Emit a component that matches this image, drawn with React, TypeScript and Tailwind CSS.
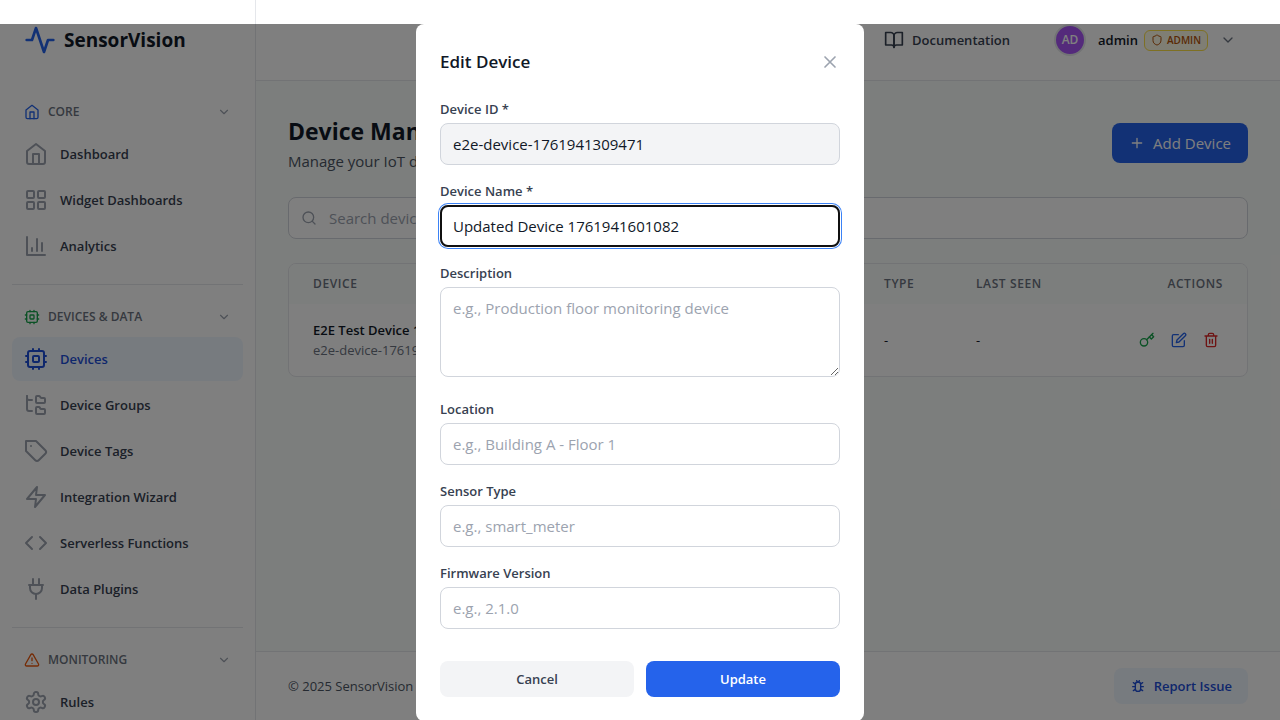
import React from 'react';

type IconProps = { className?: string; children: React.ReactNode };

function Svg({ className = 'size-6', children }: IconProps) {
  return (
    <svg
      className={'shrink-0 ' + className}
      viewBox="0 0 24 24"
      fill="none"
      stroke="currentColor"
      strokeWidth="2"
      strokeLinecap="round"
      strokeLinejoin="round"
      aria-hidden="true"
    >
      {children}
    </svg>
  );
}

const home = (
  <>
    <path d="m3 9 9-7 9 7v11a2 2 0 0 1-2 2H5a2 2 0 0 1-2-2z" />
    <polyline points="9 22 9 12 15 12 15 22" />
  </>
);
const grid = (
  <>
    <rect width="7" height="7" x="3" y="3" rx="1" />
    <rect width="7" height="7" x="14" y="3" rx="1" />
    <rect width="7" height="7" x="14" y="14" rx="1" />
    <rect width="7" height="7" x="3" y="14" rx="1" />
  </>
);
const chart = (
  <>
    <path d="M3 3v18h18" />
    <path d="M18 17V9" />
    <path d="M13 17V5" />
    <path d="M8 17v-3" />
  </>
);
const cpu = (
  <>
    <rect x="4" y="4" width="16" height="16" rx="2" />
    <rect x="9" y="9" width="6" height="6" rx="1" />
    <path d="M15 2v2M15 20v2M2 15h2M2 9h2M20 15h2M20 9h2M9 2v2M9 20v2" />
  </>
);
const folders = (
  <>
    <path d="M13 10h7a1 1 0 0 0 1-1V6a1 1 0 0 0-1-1h-2.5a1 1 0 0 1-.8-.4l-.9-1.2A1 1 0 0 0 15 3h-2a1 1 0 0 0-1 1v5a1 1 0 0 0 1 1Z" />
    <path d="M13 21h7a1 1 0 0 0 1-1v-3a1 1 0 0 0-1-1h-2.88a1 1 0 0 1-.9-.55l-.44-.9a1 1 0 0 0-.9-.55H13a1 1 0 0 0-1 1v5a1 1 0 0 0 1 1Z" />
    <path d="M3 3v2c0 1.1.9 2 2 2h3" />
    <path d="M3 3v13c0 1.1.9 2 2 2h3" />
  </>
);
const tag = (
  <>
    <path d="M12 2H2v10l9.29 9.29c.94.94 2.48.94 3.42 0l6.58-6.58c.94-.94.94-2.48 0-3.42L12 2Z" />
    <path d="M7 7h.01" />
  </>
);
const zap = <polygon points="13 2 3 14 12 14 11 22 21 10 12 10 13 2" />;
const code = (
  <>
    <polyline points="16 18 22 12 16 6" />
    <polyline points="8 6 2 12 8 18" />
  </>
);
const plug = (
  <>
    <path d="M12 22v-5M9 8V2M15 8V2M5 8h14" />
    <path d="M18 8v3a6 6 0 0 1-12 0V8" />
  </>
);
const gear = (
  <>
    <path d="M12.22 2h-.44a2 2 0 0 0-2 2v.18a2 2 0 0 1-1 1.73l-.43.25a2 2 0 0 1-2 0l-.15-.08a2 2 0 0 0-2.73.73l-.22.38a2 2 0 0 0 .73 2.73l.15.1a2 2 0 0 1 1 1.72v.51a2 2 0 0 1-1 1.74l-.15.09a2 2 0 0 0-.73 2.73l.22.38a2 2 0 0 0 2.73.73l.15-.08a2 2 0 0 1 2 0l.43.25a2 2 0 0 1 1 1.73V20a2 2 0 0 0 2 2h.44a2 2 0 0 0 2-2v-.18a2 2 0 0 1 1-1.73l.43-.25a2 2 0 0 1 2 0l.15.08a2 2 0 0 0 2.73-.73l.22-.39a2 2 0 0 0-.73-2.73l-.15-.08a2 2 0 0 1-1-1.74v-.5a2 2 0 0 1 1-1.74l.15-.09a2 2 0 0 0 .73-2.73l-.22-.38a2 2 0 0 0-2.73-.73l-.15.08a2 2 0 0 1-2 0l-.43-.25a2 2 0 0 1-1-1.73V4a2 2 0 0 0-2-2z" />
    <circle cx="12" cy="12" r="3" />
  </>
);
const warning = (
  <>
    <path d="m21.73 18-8-14a2 2 0 0 0-3.48 0l-8 14A2 2 0 0 0 4 21h16a2 2 0 0 0 1.73-3Z" />
    <path d="M12 9v4M12 17h.01" />
  </>
);
const chevron = <path d="m6 9 6 6 6-6" />;

type Item = { label: string; icon: React.ReactNode; active?: boolean };
type Group = { title: string; icon: React.ReactNode; tint: string; items: Item[] };

const groups: Group[] = [
  {
    title: 'CORE',
    icon: home,
    tint: 'size-4 text-[#2563eb]',
    items: [
      { label: 'Dashboard', icon: home },
      { label: 'Widget Dashboards', icon: grid },
      { label: 'Analytics', icon: chart },
    ],
  },
  {
    title: 'DEVICES & DATA',
    icon: cpu,
    tint: 'size-4 text-[#16a34a]',
    items: [
      { label: 'Devices', icon: cpu, active: true },
      { label: 'Device Groups', icon: folders },
      { label: 'Device Tags', icon: tag },
      { label: 'Integration Wizard', icon: zap },
      { label: 'Serverless Functions', icon: code },
      { label: 'Data Plugins', icon: plug },
    ],
  },
  {
    title: 'MONITORING',
    icon: warning,
    tint: 'size-4 text-[#ea580c]',
    items: [{ label: 'Rules', icon: gear }],
  },
];

function Sidebar() {
  return (
    <aside className="flex w-64 shrink-0 flex-col overflow-hidden border-r border-gray-200 bg-white">
      <div className="flex h-20 shrink-0 items-center gap-2 px-6">
        <Svg className="size-8 text-[#2563eb]">
          <polyline points="22 12 18 12 15 21 9 3 6 12 2 12" />
        </Svg>
        <span className="text-[19px] font-bold leading-7 text-[#111827]">SensorVision</span>
      </div>
      <nav className="flex flex-col px-3 pt-4" aria-label="Main">
        {groups.map((g, i) => (
          <section
            key={g.title}
            className={i === 0 ? 'flex flex-col' : 'mt-4 flex flex-col border-t border-gray-200 pt-4'}
          >
            <button className="flex h-8 items-center gap-2 px-3 text-[12px] font-semibold leading-4 text-[#6b7280]">
              <Svg className={g.tint}>{g.icon}</Svg>
              <span className="flex-1 text-left">{g.title}</span>
              <Svg className="size-[14px] text-[#9ca3af]">{chevron}</Svg>
            </button>
            <ul className="mt-1 flex flex-col gap-[2px]">
              {g.items.map((it) => (
                <li key={it.label}>
                  <a
                    href="#"
                    className={
                      it.active
                        ? 'flex h-11 items-center gap-3 rounded-lg bg-blue-50 px-3 text-[13px] font-semibold leading-5 text-[#1d4ed8]'
                        : 'flex h-11 items-center gap-3 rounded-lg px-3 text-[13px] font-semibold leading-5 text-[#374151]'
                    }
                  >
                    <Svg className={it.active ? 'size-6 text-[#1d4ed8]' : 'size-6 text-[#9ca3af]'}>{it.icon}</Svg>
                    {it.label}
                  </a>
                </li>
              ))}
            </ul>
          </section>
        ))}
      </nav>
    </aside>
  );
}

function Header() {
  return (
    <header className="flex h-[81px] shrink-0 items-center justify-end gap-11 border-b border-gray-200 bg-white pr-11">
      <a href="#" className="flex items-center gap-2 text-[13px] font-semibold leading-5 text-[#374151]">
        <Svg className="size-5">
          <path d="M2 3h6a4 4 0 0 1 4 4v14a3 3 0 0 0-3-3H2z" />
          <path d="M22 3h-6a4 4 0 0 0-4 4v14a3 3 0 0 1 3-3h7z" />
        </Svg>
        Documentation
      </a>
      <button className="flex items-center text-[13px] font-semibold leading-5 text-[#111827]">
        <span className="mr-3 flex size-8 items-center justify-center rounded-full border-2 border-gray-200 bg-[#a855f7] text-[12px] text-white">
          AD
        </span>
        admin
        <span className="ml-[6px] mr-3 flex h-[21px] items-center gap-1 rounded-md border border-[#fde047] bg-[#fefce8] px-[6px] text-[10px] text-[#b45309]">
          <Svg className="size-3">
            <path d="M20 13c0 5-3.5 7.5-7.66 8.95a1 1 0 0 1-.67-.01C7.5 20.5 4 18 4 13V6a1 1 0 0 1 1-1c2 0 4.5-1.2 6.24-2.72a1.17 1.17 0 0 1 1.52 0C14.51 3.81 17 5 19 5a1 1 0 0 1 1 1z" />
          </Svg>
          ADMIN
        </span>
        <Svg className="size-4 text-[#6b7280]">{chevron}</Svg>
      </button>
    </header>
  );
}

function DeviceTable() {
  return (
    <div className="overflow-hidden rounded-lg border border-gray-200 bg-white">
      <table className="w-full table-fixed text-left">
        <thead className="bg-[#f9fcfa] text-[12px] leading-4 text-[#6b7280]">
          <tr className="h-10">
            <th className="w-[571px] pl-6 font-semibold tracking-wider">DEVICE</th>
            <th className="w-[92px] pl-6 font-semibold tracking-wider">TYPE</th>
            <th className="pl-6 font-semibold tracking-wider">LAST SEEN</th>
            <th className="pr-6 text-right font-semibold tracking-wider">ACTIONS</th>
          </tr>
        </thead>
        <tbody>
          <tr className="h-[72px] text-[13px] leading-5 text-[#111827]">
            <td className="pl-6">
              <div className="font-semibold">E2E Test Device 1761941309471</div>
              <div className="text-[#6b7280]">e2e-device-1761941309471</div>
            </td>
            <td className="pl-6">-</td>
            <td className="pl-6">-</td>
            <td className="pr-6">
              <div className="flex justify-end gap-2">
                <button aria-label="Device token" className="p-1 text-[#16a34a]">
                  <Svg className="size-4">
                    <circle cx="7.5" cy="15.5" r="5.5" />
                    <path d="m21 2-9.6 9.6" />
                    <path d="m15.5 7.5 3 3L22 7l-3-3" />
                  </Svg>
                </button>
                <button aria-label="Edit device" className="p-1 text-[#2563eb]">
                  <Svg className="size-4">
                    <path d="M11 4H4a2 2 0 0 0-2 2v14a2 2 0 0 0 2 2h14a2 2 0 0 0 2-2v-7" />
                    <path d="M18.5 2.5a2.12 2.12 0 0 1 3 3L12 15l-4 1 1-4Z" />
                  </Svg>
                </button>
                <button aria-label="Delete device" className="p-1 text-[#dc2626]">
                  <Svg className="size-4">
                    <path d="M3 6h18M19 6v14c0 1-1 2-2 2H7c-1 0-2-1-2-2V6M8 6V4c0-1 1-2 2-2h4c1 0 2 1 2 2v2M10 11v6M14 11v6" />
                  </Svg>
                </button>
              </div>
            </td>
          </tr>
        </tbody>
      </table>
    </div>
  );
}

function Content() {
  return (
    <main className="flex flex-1 flex-col gap-6 px-8 pt-8">
      <div className="flex items-center justify-between">
        <div>
          <h1 className="text-[23px] font-bold leading-9 text-[#111827]">Device Management</h1>
          <p className="text-[15px] leading-6 text-[#4b5563]">Manage your IoT devices</p>
        </div>
        <button className="flex h-10 items-center gap-2 rounded-lg bg-[#2563eb] px-[17px] text-[15px] leading-6 text-white">
          <Svg className="size-4">
            <path d="M5 12h14M12 5v14" />
          </Svg>
          Add Device
        </button>
      </div>
      <div className="flex h-[42px] items-center gap-3 rounded-lg border border-gray-300 bg-white px-3">
        <Svg className="size-4 text-[#9ca3af]">
          <circle cx="11" cy="11" r="8" />
          <path d="m21 21-4.3-4.3" />
        </Svg>
        <input
          aria-label="Search devices"
          placeholder="Search devices..."
          className="min-w-0 flex-1 text-[15px] leading-6 outline-none placeholder:text-[#9ca3af]"
        />
      </div>
      <DeviceTable />
    </main>
  );
}

function Footer() {
  return (
    <footer className="flex h-[69px] shrink-0 items-center justify-between border-t border-gray-200 bg-white px-8">
      <p className="text-[13px] leading-5 text-[#4b5563]">© 2025 SensorVision</p>
      <button className="flex h-9 items-center gap-2 rounded-lg bg-blue-50 px-4 text-[13px] font-semibold leading-5 text-[#1d4ed8]">
        <Svg className="size-4">
          <rect width="8" height="14" x="8" y="6" rx="4" />
          <path d="m19 7-3 2M5 7l3 2M19 19l-3-2M5 19l3-2M20 13h-4M4 13h4M10 4l1 2M14 4l-1 2" />
        </Svg>
        Report Issue
      </button>
    </footer>
  );
}

const labelClass = 'mb-1 block text-[13px] font-semibold leading-5 text-[#374151]';
const fieldClass =
  'block w-full rounded-lg border border-gray-300 px-3 py-2 text-[15px] leading-6 text-[#111827] placeholder:text-[#9ca3af]';

function EditDialog() {
  return (
    <div
      role="dialog"
      aria-modal="true"
      aria-labelledby="dialog-title"
      className="flex w-full max-w-md flex-col rounded-lg bg-white p-6"
    >
      <div className="mb-6 flex items-center justify-between">
        <h2 id="dialog-title" className="text-[17px] font-semibold leading-[27px] text-[#111827]">
          Edit Device
        </h2>
        <button aria-label="Close" className="text-[#9ca3af]">
          <Svg className="size-5">
            <path d="M18 6 6 18M6 6l12 12" />
          </Svg>
        </button>
      </div>
      <form className="flex flex-col gap-4">
        <div>
          <label htmlFor="device-id" className={labelClass}>
            Device ID *
          </label>
          <input id="device-id" className={fieldClass + ' bg-gray-100'} defaultValue="e2e-device-1761941309471" readOnly />
        </div>
        <div>
          <label htmlFor="device-name" className={labelClass}>
            Device Name *
          </label>
          <input
            id="device-name"
            className={
              fieldClass +
              ' outline-2 -outline-offset-2 outline-[#101010] shadow-[0_0_0_1px_#ffffff,0_0_0_2px_#3b82f6]'
            }
            defaultValue="Updated Device 1761941601082"
          />
        </div>
        <div>
          <label htmlFor="description" className={labelClass}>
            Description
          </label>
          <textarea
            id="description"
            rows={3}
            className={fieldClass + ' h-[90px] resize-y'}
            placeholder="e.g., Production floor monitoring device"
          />
        </div>
        <div className="mt-[6px]">
          <label htmlFor="location" className={labelClass}>
            Location
          </label>
          <input id="location" className={fieldClass} placeholder="e.g., Building A - Floor 1" />
        </div>
        <div>
          <label htmlFor="sensor-type" className={labelClass}>
            Sensor Type
          </label>
          <input id="sensor-type" className={fieldClass} placeholder="e.g., smart_meter" />
        </div>
        <div>
          <label htmlFor="firmware" className={labelClass}>
            Firmware Version
          </label>
          <input id="firmware" className={fieldClass} placeholder="e.g., 2.1.0" />
        </div>
        <div className="mt-4 grid grid-cols-2 gap-3 text-[13px] font-semibold leading-5">
          <button type="button" className="rounded-lg bg-gray-100 px-4 py-2 text-[#374151]">
            Cancel
          </button>
          <button type="submit" className="rounded-lg bg-[#2563eb] px-4 py-2 text-white">
            Update
          </button>
        </div>
      </form>
    </div>
  );
}

export default function App() {
  return (
    <div className="relative h-screen overflow-hidden font-['Open_Sans','Noto_Sans',sans-serif]">
      <div className="flex h-full">
        <Sidebar />
        <div className="flex min-w-0 flex-1 flex-col bg-[#f9fcfa]">
          <Header />
          <Content />
          <Footer />
        </div>
      </div>
      <div className="absolute inset-x-0 bottom-0 top-6 flex items-start justify-center bg-black/50">
        <EditDialog />
      </div>
    </div>
  );
}
